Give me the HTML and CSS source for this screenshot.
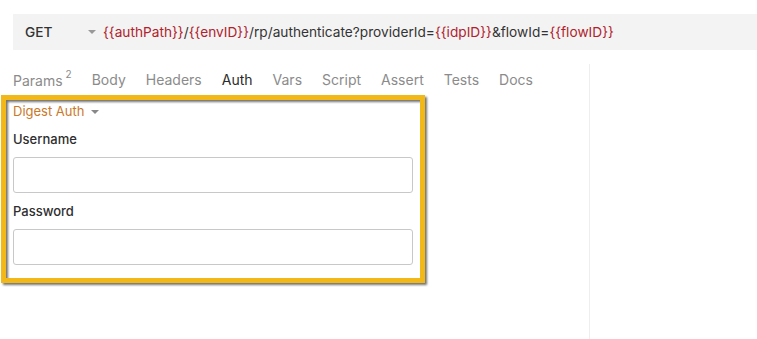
FILE: index.html
```html
<!DOCTYPE html>
<html lang="en">
<head>
    <meta charset="UTF-8" />
    <title>Request - Auth</title>
    <link rel="stylesheet" href="styles.css">
</head>
<body>
<div class="url-bar">
    <div class="method">GET</div>
    <span class="caret"></span>
    <div class="url">
        <span class="var">{{authPath}}</span>/<span class="var">{{envID}}</span>/rp/authenticate?providerId=<span class="var">{{idpID}}</span>&amp;flowId=<span class="var">{{flowID}}</span>
    </div>
</div>
<div class="main">
    <div class="request-pane">
        <div class="tabs">
            <div class="tab">Params<sup>2</sup></div>
            <div class="tab">Body</div>
            <div class="tab">Headers</div>
            <div class="tab active">Auth</div>
            <div class="tab">Vars</div>
            <div class="tab">Script</div>
            <div class="tab">Assert</div>
            <div class="tab">Tests</div>
            <div class="tab">Docs</div>
        </div>
        <div class="auth">
            <div class="auth-mode">Digest Auth <span class="caret"></span></div>
            <label for="username">Username</label>
            <input type="text" id="username" />
            <label for="password">Password</label>
            <input type="text" id="password" />
        </div>
        <!-- highlight frame drawn over the auth section -->
        <div class="highlight"></div>
    </div>
    <div class="response-pane"></div>
</div>
</body>
</html>
```

FILE: styles.css
```css
* {
    box-sizing: border-box;
}

body {
    margin: 0;
    font-family: Inter, 'Noto Sans', sans-serif;
    background: #fff;
    color: #343434;
    height: 339px;
    overflow: hidden;
}

.url-bar {
    display: flex;
    align-items: center;
    height: 36px;
    margin: 14px 0 0 13px;
    background: #f3f3f3;
    font-size: 13.7px;
}

.method {
    width: 75px;
    padding-left: 12px;
    font-weight: 500;
    color: #333;
}

.caret {
    display: inline-block;
    width: 0;
    height: 0;
    border-left: 4px solid transparent;
    border-right: 4px solid transparent;
    border-top: 4px solid #999;
    vertical-align: middle;
}

.url-bar .caret {
    margin-right: 7px;
}

.url {
    color: #333;
    white-space: nowrap;
}

.var {
    color: #b0222c;
}

.main {
    display: flex;
    height: 289px;
}

.request-pane {
    width: 589px;
    position: relative;
    padding: 17px 0 0 13px;
}

.response-pane {
    flex: 1;
    margin-top: 14px;
    border-left: 1px solid #eee;
}

.tabs {
    display: flex;
    gap: 20px;
    font-size: 14px;
    color: #8b8b8b;
    height: 24px;
    align-items: center;
}

.tab sup {
    font-size: 10px;
    margin-left: 3px;
    position: relative;
    top: -2px;
}

.tab.active {
    color: #2b2b2b;
}

.auth {
    width: 400px;
    padding-top: 12px;
}

.auth-mode {
    color: #c9792a;
    font-size: 13px;
    height: 18px;
}

.auth-mode .caret {
    margin-left: 3px;
    border-top-color: #888;
}

label {
    display: block;
    margin-top: 10px;
    font-size: 13px;
    font-weight: 500;
    color: #2e2e2e;
    height: 18px;
}

input[type='text'] {
    display: block;
    width: 100%;
    height: 36px;
    margin-top: 8px;
    border: 1px solid #c8c8c8;
    border-radius: 3px;
    background: #fff;
}

.highlight {
    position: absolute;
    left: 1px;
    top: 45px;
    width: 424px;
    height: 188px;
    border: 5px solid #f2b818;
    filter: drop-shadow(2px 2px 1px rgba(0, 0, 0, 0.55));
}
```
